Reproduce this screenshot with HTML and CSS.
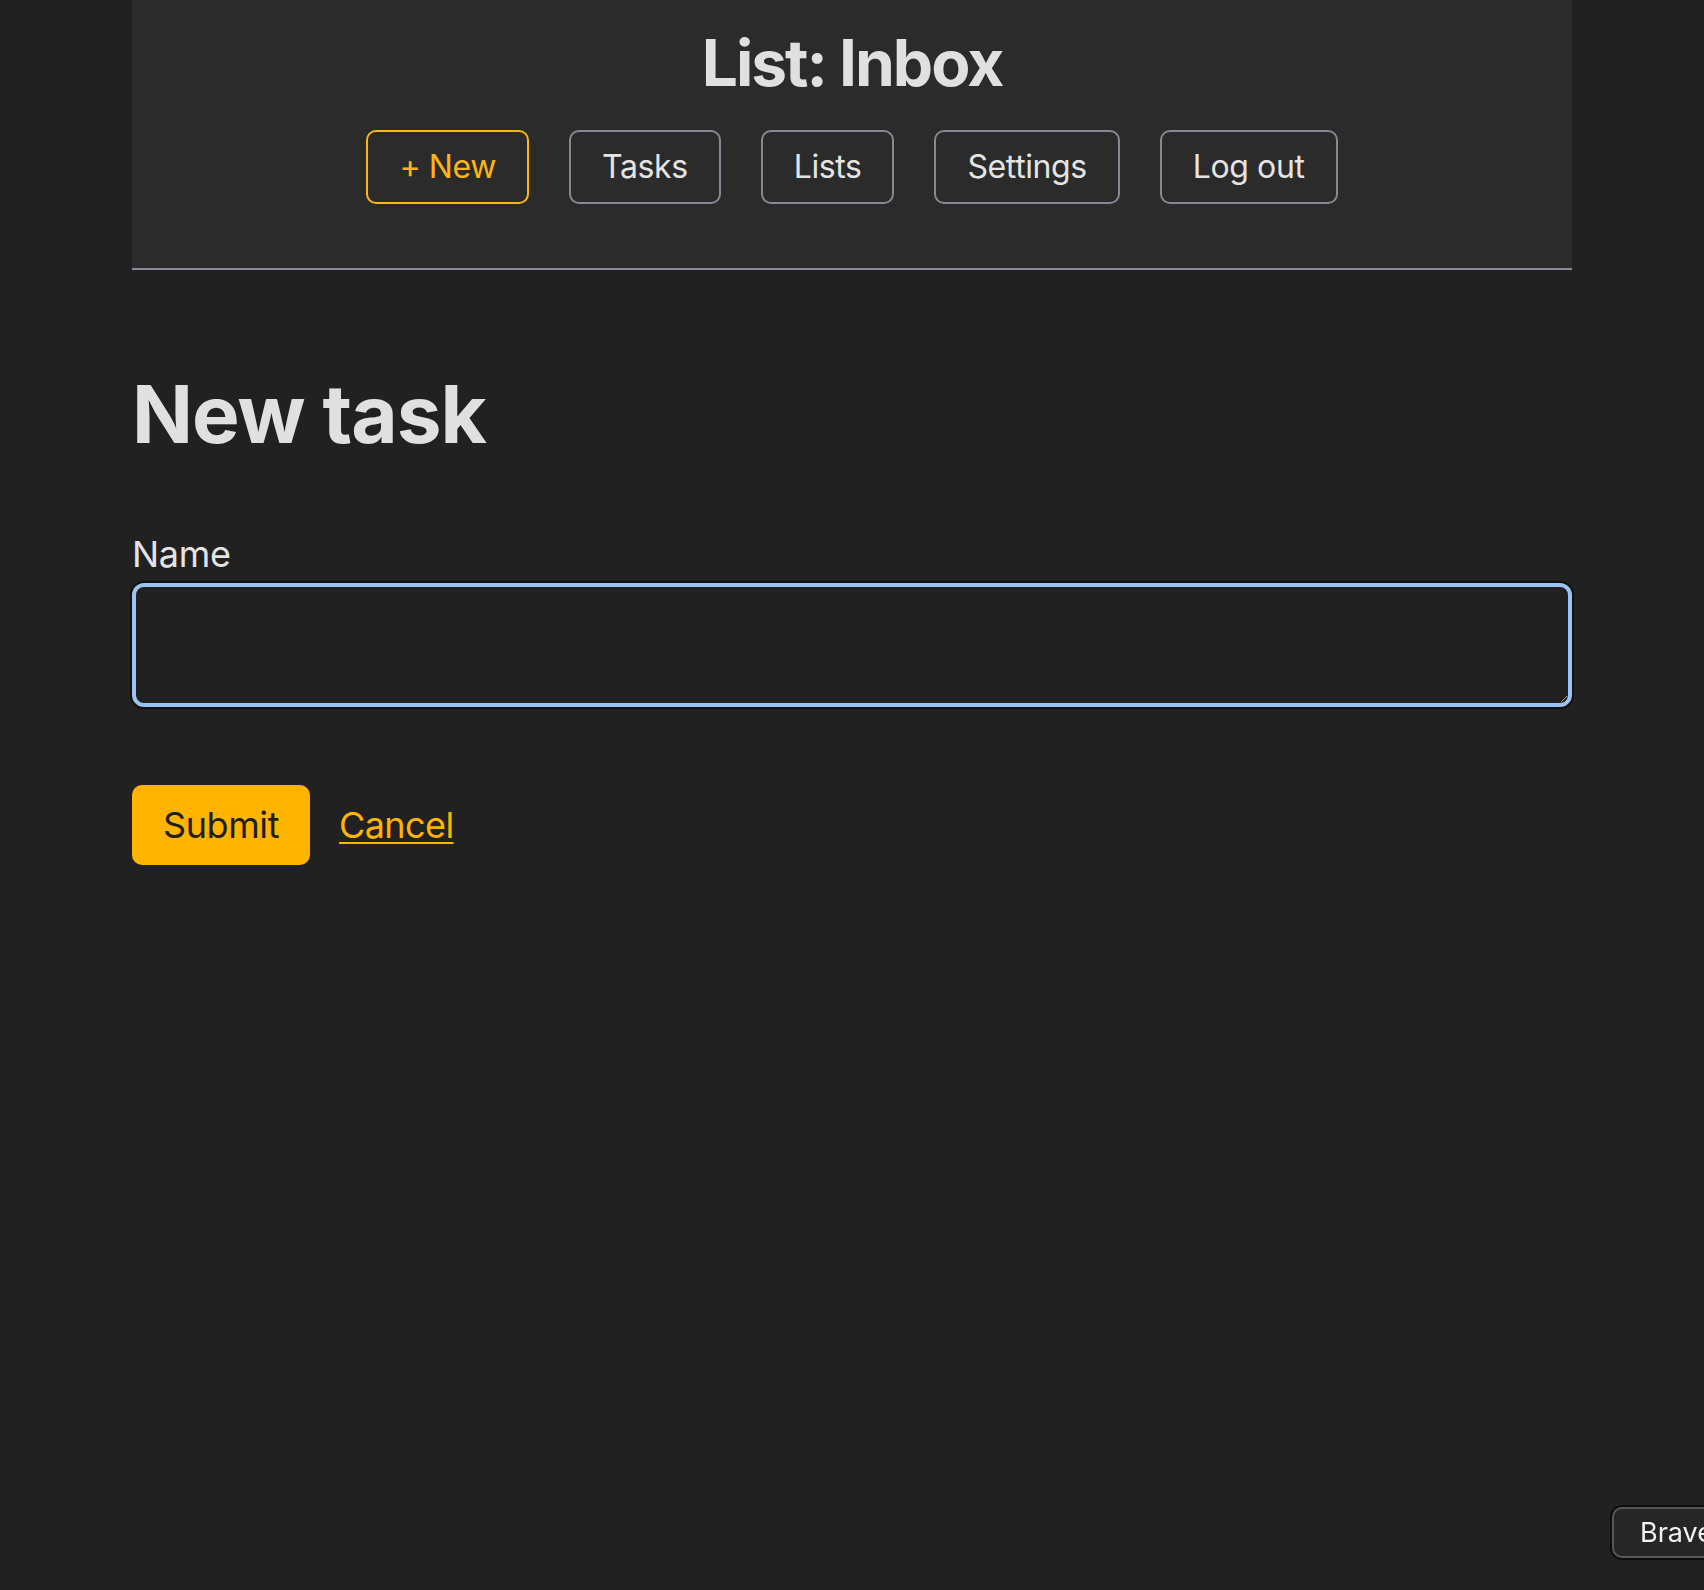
FILE: index.html
```html
<!DOCTYPE html>
<html lang="en">
<head>
<meta charset="utf-8">
<title>New task</title>
<link rel="stylesheet" href="styles.css">
</head>
<body>
<div class="page">
  <header class="site-header">
    <h1 class="site-title">List: Inbox</h1>
    <nav class="nav">
      <a class="nav-btn nav-btn--accent" href="#">+ New</a>
      <a class="nav-btn" href="#">Tasks</a>
      <a class="nav-btn" href="#">Lists</a>
      <a class="nav-btn" href="#">Settings</a>
      <a class="nav-btn" href="#">Log out</a>
    </nav>
  </header>
  <main class="main">
    <h1 class="page-title">New task</h1>
    <form class="form">
      <label class="field-label" for="name">Name</label>
      <textarea class="field-input" id="name" name="name"></textarea>
      <div class="actions">
        <button class="submit" type="submit">Submit</button>
        <a class="cancel" href="#">Cancel</a>
      </div>
    </form>
  </main>
</div>
<div class="brave-pill">Brave</div>
</body>
</html>
```

FILE: styles.css
```css
html, body {
  margin: 0;
  padding: 0;
  background: #212121;
  color: #e2e2e2;
  font-family: Inter, "Noto Sans", "Liberation Sans", sans-serif;
}

body {
  min-height: 1590px;
  overflow: hidden;
}

.page {
  width: 1440px;
  margin: 0 auto;
}

.site-header {
  background: #2b2b2b;
  padding: 24px 0 64px;
  border-bottom: 2px solid #8a8a9a;
  display: flex;
  flex-direction: column;
  align-items: center;
}

.site-title {
  margin: 0;
  font-size: 64px;
  line-height: 77px;
  font-weight: 700;
  letter-spacing: -2px;
  color: #e0e0e0;
}

.nav {
  margin-top: 29px;
  display: flex;
  gap: 40px;
}

.nav-btn {
  display: block;
  padding: 16px 31px;
  font-size: 32px;
  line-height: 38px;
  border: 2px solid #878796;
  border-radius: 10px;
  color: #e4e4e4;
  text-decoration: none;
  letter-spacing: -0.4px;
}

.nav-btn--accent {
  border-color: #fdb515;
  color: #fdb515;
}

.main {
  padding-top: 96px;
}

.page-title {
  margin: 0;
  font-size: 80px;
  line-height: 96px;
  font-weight: 700;
  letter-spacing: -1px;
  color: #e0e0e0;
}

.form {
  margin-top: 71px;
  display: flex;
  flex-direction: column;
}

.field-label {
  font-size: 36px;
  line-height: 43px;
  color: #e4e4e4;
  letter-spacing: -0.3px;
}

.field-input {
  margin-top: 7px;
  box-sizing: border-box;
  width: 1440px;
  height: 124px;
  background: #212121;
  border: 4px solid #9cc4f2;
  border-radius: 12px;
  box-shadow: 0 0 0 2px #111;
  outline: none;
  color: #e4e4e4;
  font-family: inherit;
  font-size: 32px;
}

.actions {
  margin-top: 78px;
  display: flex;
  align-items: center;
  gap: 29px;
}

.submit {
  height: 80px;
  padding: 0 31px;
  background: #ffb400;
  color: #1e1e1e;
  border: none;
  border-radius: 10px;
  font-family: inherit;
  font-size: 36px;
  line-height: 43px;
  letter-spacing: -0.4px;
}

.cancel {
  color: #ffb400;
  font-size: 36px;
  line-height: 43px;
  text-decoration: underline;
  text-decoration-thickness: 2px;
  text-underline-offset: 4px;
  letter-spacing: -0.6px;
}

.brave-pill {
  position: fixed;
  left: 1612px;
  top: 1507px;
  width: 140px;
  height: 51px;
  box-sizing: border-box;
  padding-left: 26px;
  background: #262626;
  border: 2px solid #575757;
  border-radius: 10px;
  box-shadow: 0 0 0 2px #0d0d0d;
  color: #f2f2f2;
  font-size: 27px;
  line-height: 47px;
}
```
